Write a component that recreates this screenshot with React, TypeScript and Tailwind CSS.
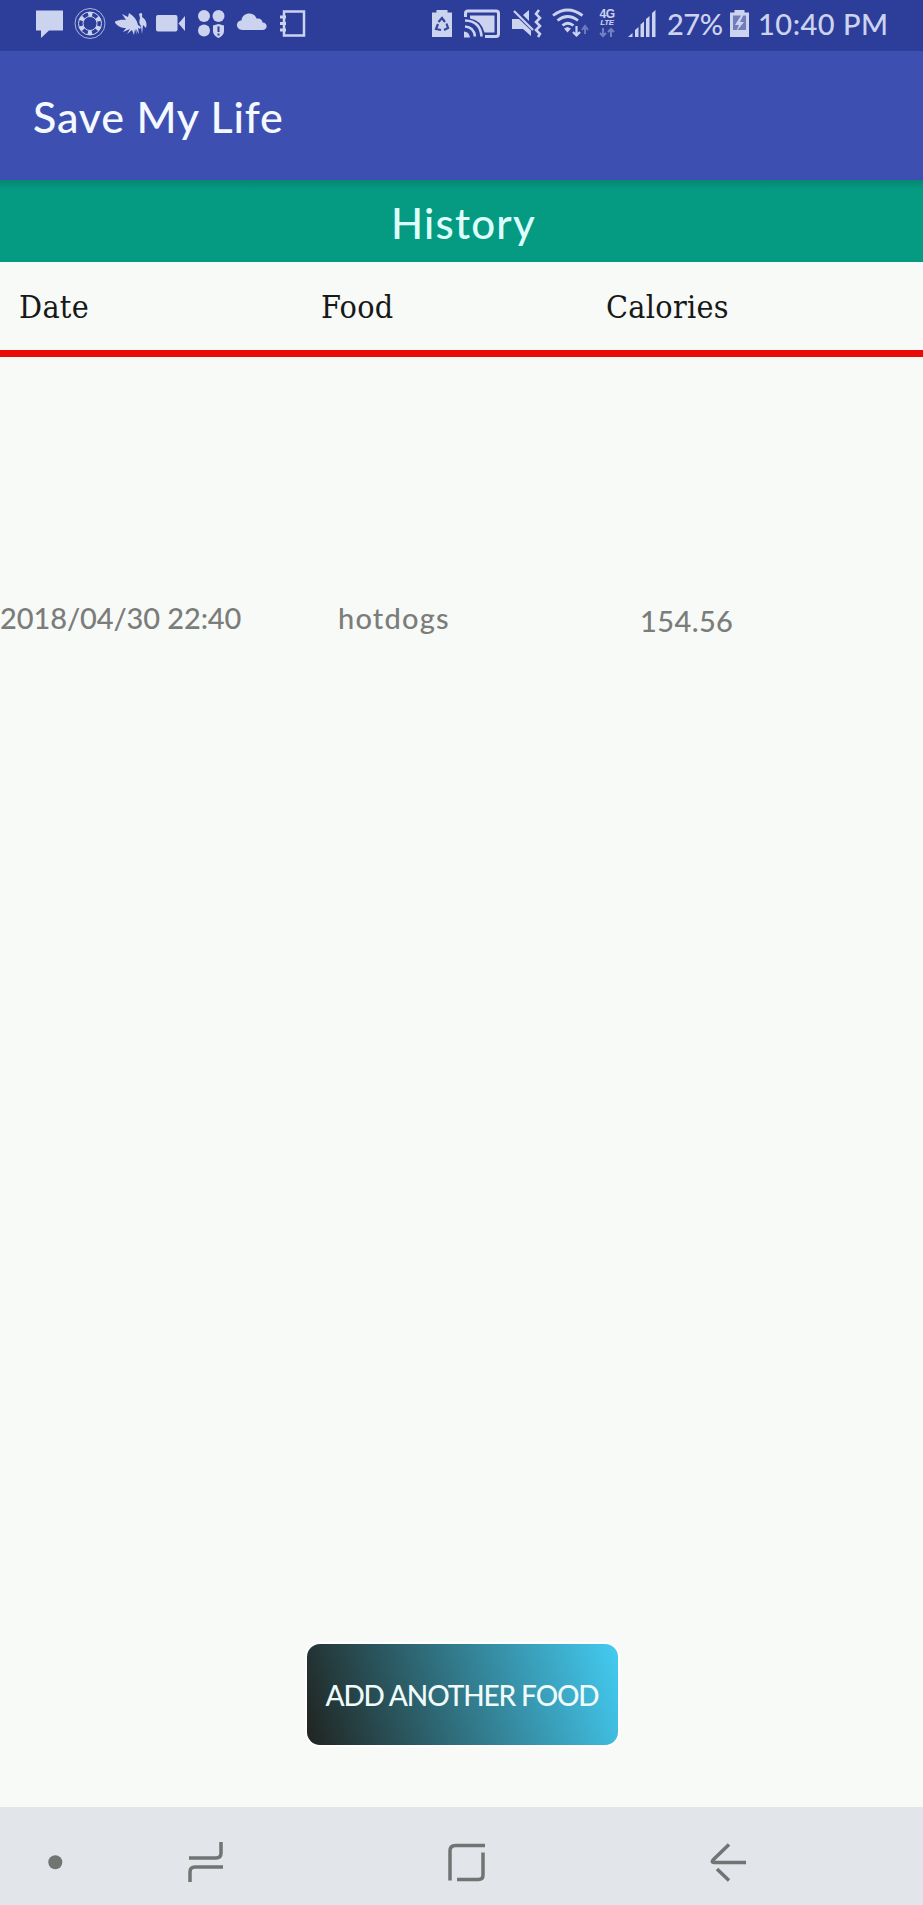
import type { ReactNode } from "react";

type IconProps = { box: string; className: string; children: ReactNode };

function Icon({ box, className, children }: IconProps) {
  return (
    <svg viewBox={box} className={`block shrink-0 overflow-visible ${className}`} fill="currentColor" stroke="none">
      {children}
    </svg>
  );
}

function StatusBar() {
  return (
    <div className="flex h-[51px] shrink-0 items-start bg-[#2d3e9a] pt-2 text-[#ccd3ef]">
      <Icon box="0 0 27 30" className="ml-9 h-[30px] w-[27px]">
        <path d="M0 2.500h27v20H13L5 30v-7.500H0z" />
      </Icon>
      <Icon box="0 0 32 32" className="ml-[11px] h-8 w-8">
        <g fill="none" stroke="currentColor">
          <circle cx="16" cy="15.500" r="15" strokeWidth="0.800" />
          <circle cx="16" cy="15.500" r="11.500" strokeWidth="1" />
          <circle cx="16" cy="15.500" r="7" strokeWidth="1" />
          <circle cx="16" cy="15.500" r="9.200" strokeWidth="4.500" strokeDasharray="4.200 5.434" strokeDashoffset="-2.700" />
        </g>
      </Icon>
      <Icon box="0 0 32 30" className="ml-[9px] h-[30px] w-8">
        <path d="M0 13.500c4-2 8-2 11-1.500L7 6l6 3 1-4c5 3 8 7 9 12l3 2-1 2-2-1 1 6-3-5 1 6-2-6-1 6-2-5-5 4 3-5-7 3 3-4c-5 0-9-2-11-5.500z" />
        <path d="M24 6q4-3 3 3c5 3 5 8 4 11l-3-3-1 9-1-8c-2-2-2-5-1-8z" />
      </Icon>
      <Icon box="0 0 30 30" className="ml-[9px] h-[30px] w-[30px]">
        <rect y="7" width="21.500" height="16.500" rx="2" />
        <path d="M22.500 15.500 29 8v15z" />
      </Icon>
      <Icon box="0 0 28 30" className="ml-3 h-[30px] w-7">
        <circle cx="6" cy="8" r="6" />
        <circle cx="20.500" cy="8" r="6" />
        <circle cx="6" cy="22.500" r="6" />
        <path d="M15 17.500 20.500 16l5.500 1.500V23c0 3.500-2.500 5.500-5.500 7-3-1.500-5.500-3.500-5.500-7z" />
        <path d="M20.500 18.500V24M20.500 25.500v2" stroke="#2d3e9a" strokeWidth="2" />
      </Icon>
      <Icon box="0 0 30 30" className="ml-[11px] h-[30px] w-[30px]">
        <path d="M5.500 22C-2 22-1.500 12.500 4.500 12.500 5 4.500 17 3 19.500 10.500c4-.5 6 1.500 6 4C31 14.500 31 22 25.500 22z" />
      </Icon>
      <Icon box="0 0 26 30" className="ml-[13px] h-[30px] w-[26px]">
        <path d="M4 3.500h20v24H4z" fill="none" stroke="currentColor" strokeWidth="2.500" />
        <path d="M0 9h6M0 15.500h6M0 22h6" stroke="currentColor" strokeWidth="3" />
      </Icon>

      <Icon box="0 0 20 30" className="ml-[126px] h-[30px] w-5">
        <path d="M4.500 2h11v2.500H20V29H0V4.500h4.500z" />
        <g fill="none" stroke="#34469e" strokeWidth="2.200">
          <path d="m6.500 14 3.500-4 3 4M14.500 15.500l1.500 4.500-4 2M9 22l-5-1 2-5" />
        </g>
      </Icon>
      <Icon box="0 0 36 30" className="ml-3 h-[30px] w-9">
        <g fill="none" stroke="currentColor">
          <path d="M1.500 9V5.500Q1.500 3 4 3H32q2.500 0 2.500 2.500v20Q34.500 28.500 32 28.500H21" strokeWidth="3" />
          <path d="M1 12.500q15.500.5 16.500 16M1 18.500q9 .5 10 10" strokeWidth="2.600" />
        </g>
        <path d="M6 7.500h24.500v17H20.500Q17 12 6 10.500z" />
        <path d="M0 23.500q5 0 6 6H0z" />
      </Icon>
      <Icon box="0 0 30 30" className="ml-3 h-[30px] w-[30px]">
        <path d="M0 11h7l12 11.500V28l-8-7H0zM11 7l6-5v11z" />
        <path d="m2 3 19 19" stroke="currentColor" strokeWidth="2.200" />
        <path d="m27 2-3 4 4 4-4 4 4 4-4 4 4 4-2 3" fill="none" stroke="currentColor" strokeWidth="2.500" />
      </Icon>
      <Icon box="0 0 38 30" className="ml-[10px] h-[30px] w-[38px]">
        <g fill="none" stroke="currentColor" strokeWidth="2.800">
          <path d="M1 7.500Q15.500-3.500 30.500 7.500M5.500 12.500q10-8 20.500 0M10.500 17.500q5-4.500 11 0" />
          <path d="M24.500 18v9M21 24l3.500 3.500L28 24" strokeWidth="2.200" />
          <path d="M33 26v-8m-3 4 3-4 3 4" strokeWidth="2" className="opacity-40" />
        </g>
        <path d="m12 20.500 3.500-1.500 3.500 1.500-3.500 4z" />
      </Icon>
      <div className="ml-[8px] flex w-[18px] shrink-0 flex-col items-center font-['Liberation_Sans'] font-bold">
        <span className="mt-px text-[12px] leading-[10px] tracking-[-0.5px]">4G</span>
        <span className="text-[8px] leading-[8px] italic tracking-[-0.4px]">LTE</span>
        <Icon box="0 0 16 9" className="mt-px h-[9px] w-4 opacity-45">
          <path d="M4 0v8M1 5l3 3 3-3M12 9V1M9 4l3-3 3 3" fill="none" stroke="currentColor" strokeWidth="2" />
        </Icon>
      </div>
      <Icon box="0 0 28 30" className="ml-3 h-[30px] w-7">
        <path d="M0 29l4.500-4v4zM7 22l3.500-3v10H7zM12.500 16.500l3.500-3V29h-3.500zM18 11l3.500-3v21H18zM24 5l3.500-3v27H24z" />
      </Icon>
      <span className="ml-[11px] w-[63px] whitespace-nowrap font-['Lato'] text-[29px] leading-[32px] font-medium tracking-[-0.5px]">27%</span>
      <Icon box="0 0 19 30" className="h-[30px] w-[19px]">
        <path d="M4.500 2h10v2.500H19V29H0V4.500h4.500z" />
        <path d="M3 7.500h13V22H3z" fill="#717db9" />
        <path d="m12 6-7 11h4l-3 7 8-10h-4l4-8z" />
      </Icon>
      <span className="ml-[9px] whitespace-nowrap font-['Lato'] text-[29px] leading-[32px] font-medium tracking-[0.5px]">10:40 PM</span>
    </div>
  );
}

function HistoryTable() {
  return (
    <section className="flex-1 text-[#7b7d7b]">
      <div className="grid h-[95px] grid-cols-[321px_285px_1fr] border-b-[7px] border-[#e90b08] pt-[25px] font-['DejaVu_Serif'] text-[32px] leading-[40px] tracking-[0.3px] text-[#161917] [font-stretch:condensed]">
        <span className="pl-[19px]">Date</span>
        <span>Food</span>
        <span>Calories</span>
      </div>
      <div className="grid grid-cols-[338px_302px_1fr] pt-[241px] font-['Lato'] text-[29px] leading-[40px] font-medium">
        <span className="whitespace-nowrap tracking-[-0.1px]">2018/04/30 22:40</span>
        <span className="tracking-[1.2px]">hotdogs</span>
        <span className="pt-[3px] tracking-[0.4px]">154.56</span>
      </div>
    </section>
  );
}

function NavigationBar() {
  return (
    <nav className="flex h-[98px] shrink-0 items-start bg-[#e2e5ea] pt-[34px] text-[#707472]">
      <Icon box="0 0 14 40" className="ml-12 h-10 w-[14px]">
        <circle cx="7.300" cy="21.300" r="7" />
      </Icon>
      <Icon box="0 0 36 42" className="ml-[126px] h-[42px] w-9">
        <path d="M1 17h27q5 0 5-5V1M35 26H7q-5 0-5 5v10" fill="none" stroke="currentColor" strokeWidth="3.500" />
      </Icon>
      <Icon box="0 0 38 40" className="ml-[223px] h-10 w-[38px]">
        <path d="M3 39.500V10q0-5.500 5.500-5.500H38M36 11.500V34q0 4.500-4.500 4.500H10" fill="none" stroke="currentColor" strokeWidth="3.500" />
      </Icon>
      <Icon box="0 0 36 40" className="ml-[225px] h-10 w-9">
        <path d="M19 3.500 3 19q-2 2.500 1 2.500h32M7 28l12 11.500" fill="none" stroke="currentColor" strokeWidth="3.500" />
      </Icon>
    </nav>
  );
}

export default function App() {
  return (
    <main className="flex h-[1905px] w-[923px] flex-col overflow-hidden bg-[#f8faf7]">
      <StatusBar />
      <header className="flex h-[129px] shrink-0 items-center bg-[#3d50b2] pb-px pl-[33px] pt-[3px] font-['Lato'] text-[43px] leading-[52px] font-medium tracking-[0.8px] text-[#f4f9ff]">
        <h1>Save My Life</h1>
      </header>
      <h2 className="flex h-[82px] shrink-0 items-center justify-center bg-linear-to-b from-[#078672] from-0% to-[#059b83] to-12% pl-1 pt-1 font-['Lato'] text-[42px] leading-[52px] font-medium tracking-[1.2px] text-[#dcfffb]">
        History
      </h2>
      <HistoryTable />
      <div className="flex shrink-0 justify-center pb-[62px] pl-px">
        <button className="flex h-[101px] w-[311px] items-center justify-center whitespace-nowrap rounded-[13px] bg-linear-[72deg] from-[#202420] to-[#43ccf2] font-['Lato'] text-[28px] leading-[36px] font-medium tracking-[-1.1px] text-[#effbfa] shadow-[0_0_0_2px_#ffffff]">
          ADD ANOTHER FOOD
        </button>
      </div>
      <NavigationBar />
    </main>
  );
}
